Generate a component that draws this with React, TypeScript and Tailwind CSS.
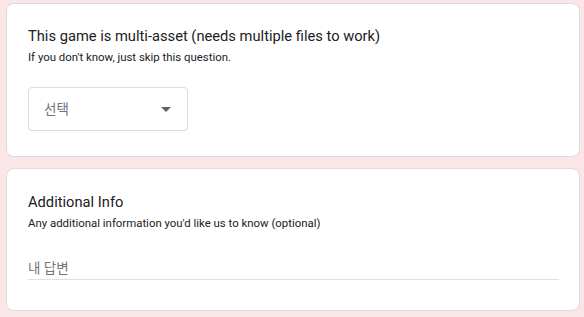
const fontStack = "font-['Roboto','Noto_Sans_CJK_KR',sans-serif]";

const Card = ({ children, classes }: { children: React.ReactNode; classes?: string }) => {
	return (
		<div className={`ml-[6px] w-[574px] rounded-[8px] border border-[#dadce0] bg-white px-[21px] ${classes}`}>
			{children}
		</div>
	);
};

const App = () => {
	return (
		<div className={`h-[317px] w-[584px] overflow-hidden bg-[#fae6e6] pt-[3px] ${fontStack}`}>
			<Card classes="pt-[22px] pb-[25px]">
				<div className="text-[14.7px] leading-[20px] text-[#202124]">
					This game is multi-asset (needs multiple files to work)
				</div>
				<div className="mt-[3px] text-[11.4px] leading-[16px] text-[#202124]">
					If you don't know, just skip this question.
				</div>
				<div className="mt-[22px] flex h-[44px] w-[160px] items-center justify-between rounded-[4px] border border-[#dadce0] pl-[15px] pr-[16px]">
					<span className="text-[13.5px] leading-[20px] text-[#70757a]">선택</span>
					<svg width="10" height="5" viewBox="0 0 10 5">
						<path d="M0 0 L10 0 L5 5 Z" fill="#5f6368" />
					</svg>
				</div>
			</Card>
			<Card classes="mt-[11px] pt-[23px] pb-[30px]">
				<div className="text-[14.7px] leading-[20px] text-[#202124]">Additional Info</div>
				<div className="mt-[3px] text-[11.4px] leading-[16px] text-[#202124]">
					Any additional information you'd like us to know (optional)
				</div>
				<div className="mt-[27px] w-[531px] border-b border-[#e0e0e0] pb-[1px]">
					<div className="text-[13.5px] leading-[20px] text-[#70757a]">내 답변</div>
				</div>
			</Card>
		</div>
	);
};

export default App;
